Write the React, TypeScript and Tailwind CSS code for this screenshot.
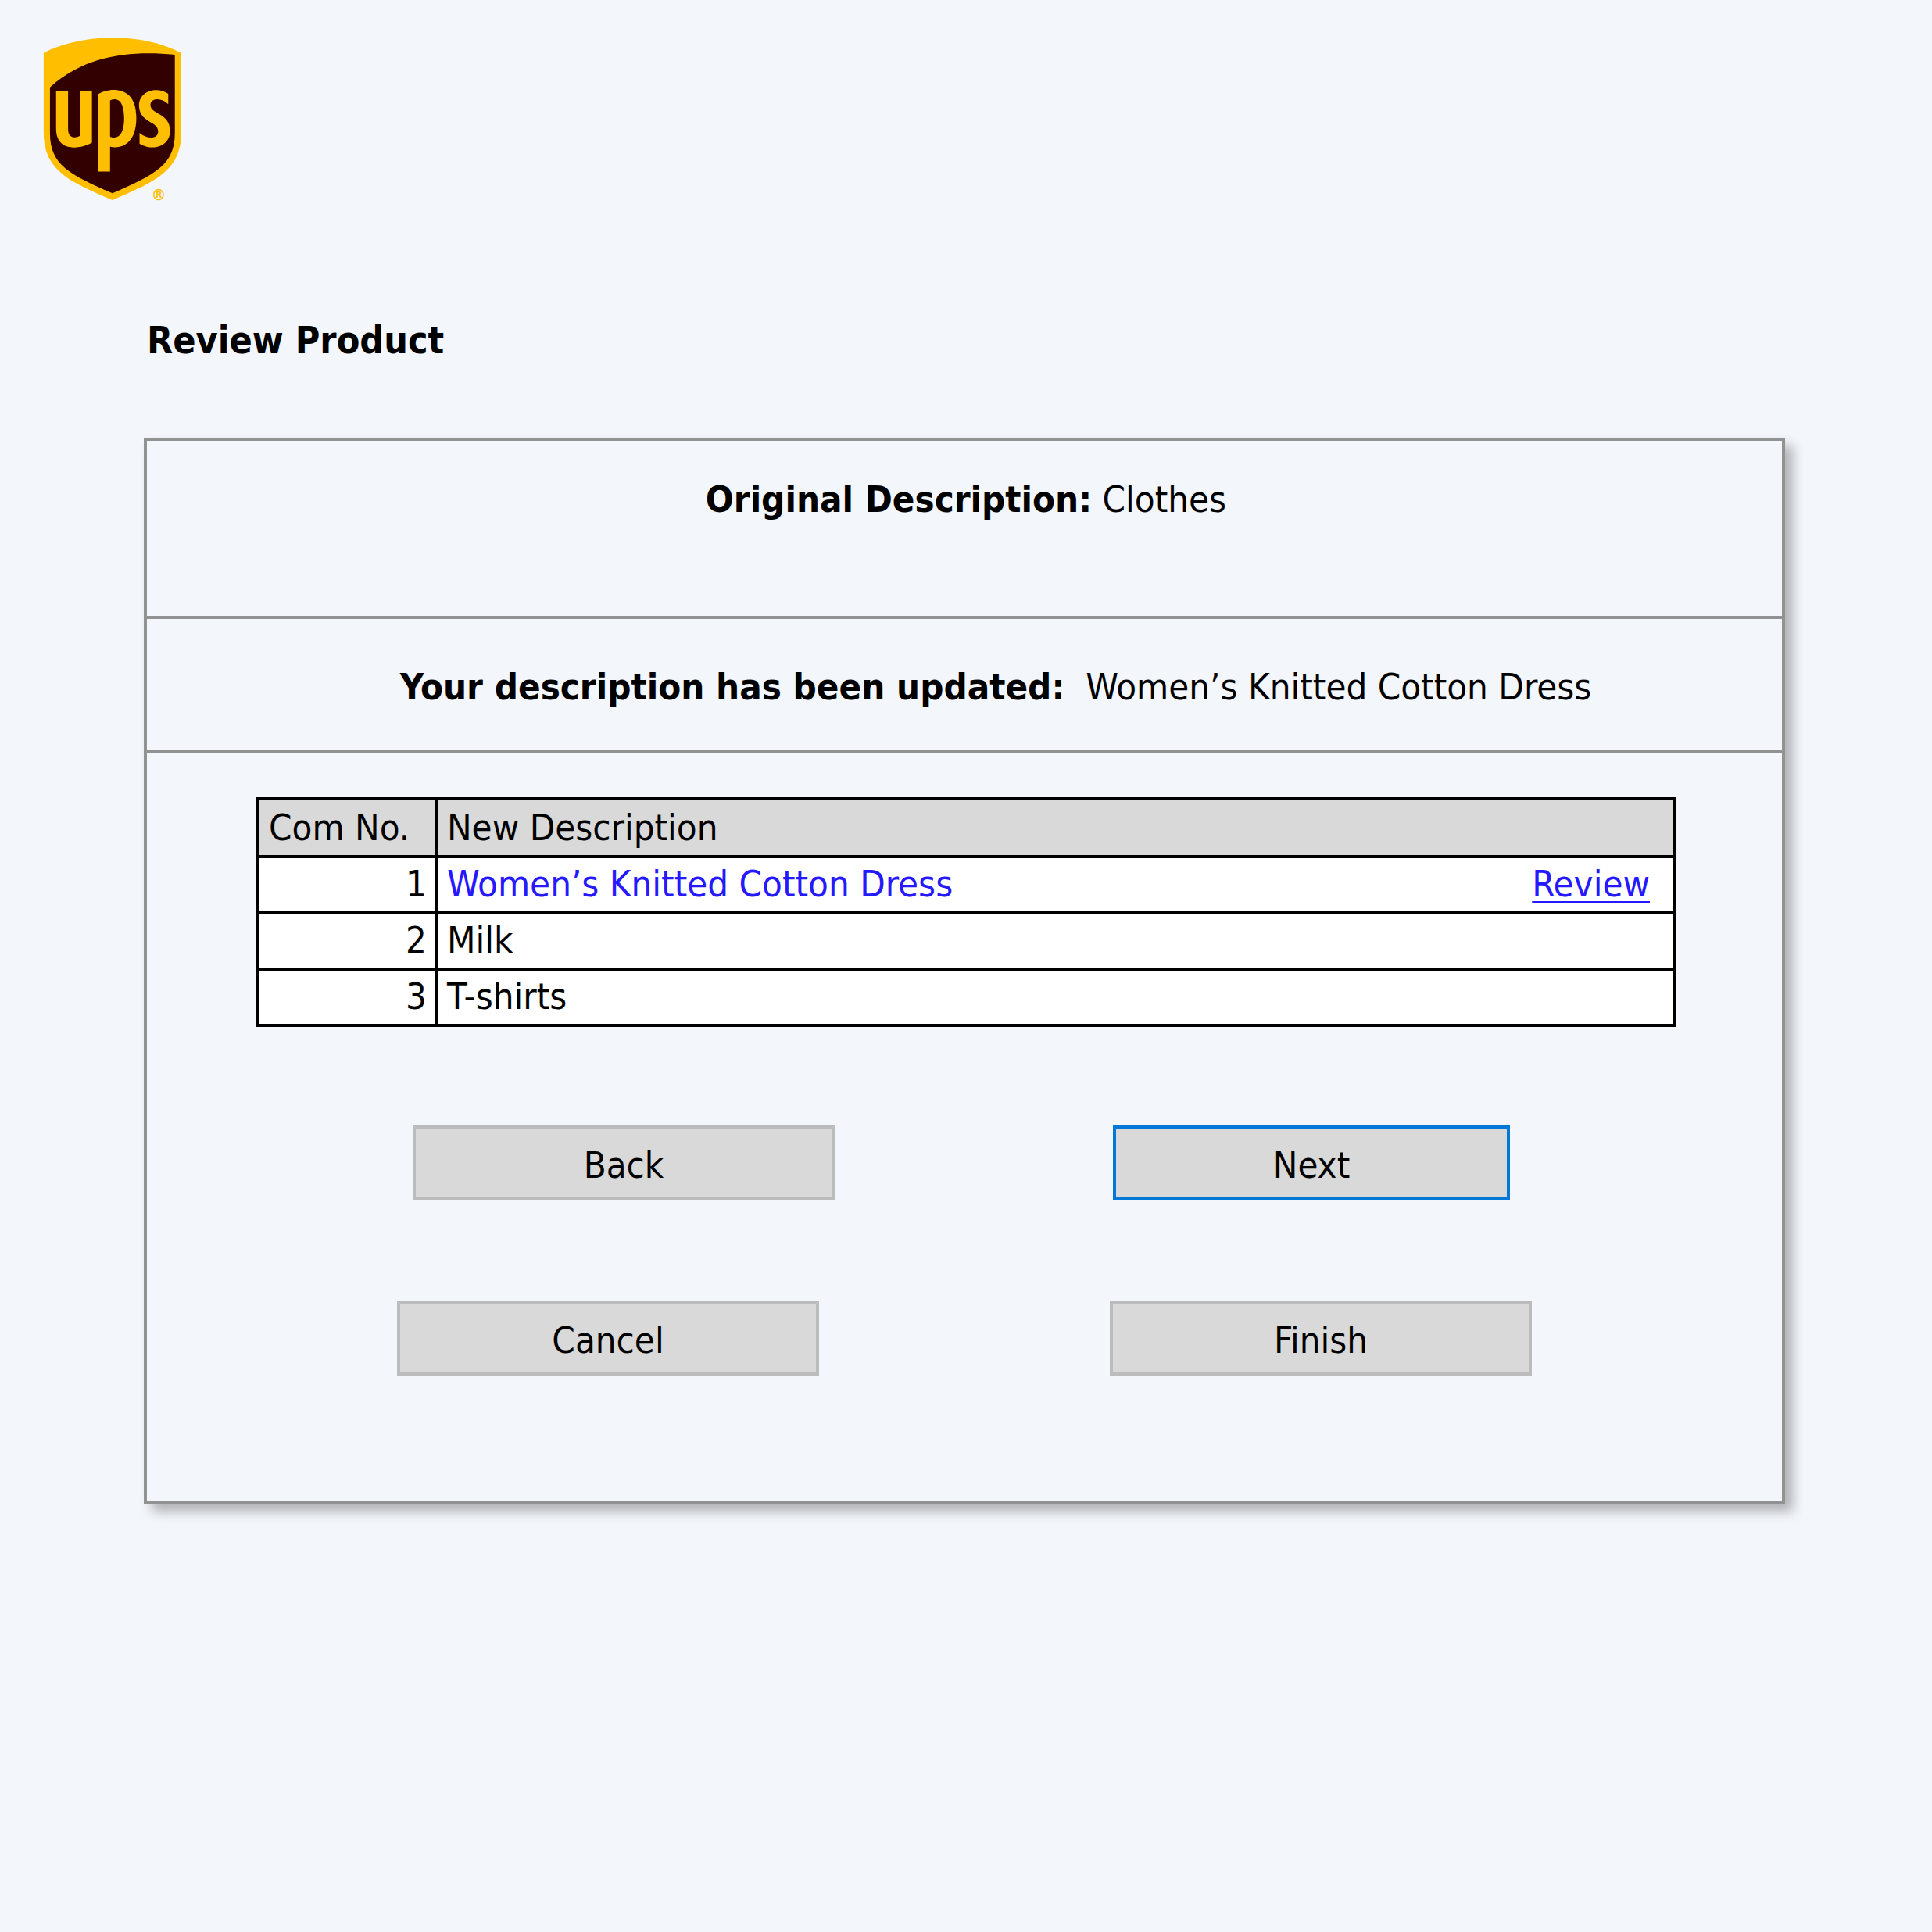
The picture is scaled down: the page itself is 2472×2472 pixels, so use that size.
import type { ButtonHTMLAttributes, ReactNode } from 'react';
import { FaUps } from 'react-icons/fa';

type Product = { no: number; description: string; updated?: boolean };

const products: Product[] = [
  { no: 1, description: 'Women’s Knitted Cotton Dress', updated: true },
  { no: 2, description: 'Milk' },
  { no: 3, description: 'T-shirts' },
];

function Logo() {
  return (
    <svg
      role="img"
      aria-label="UPS"
      viewBox="0 0 180 238"
      className="ml-[54px] h-[238px] w-[180px] overflow-visible text-[#ffbe00]"
    >
      <svg viewBox="0 0 384 512" width="180" height="238" preserveAspectRatio="none">
        <path
          fill="#330000"
          d="M12 130L80 85L200 60L300 60L370 78V297C370 345 354 380 324 404C289 432 234 452 192 471C150 452 95 432 60 404C30 380 12 345 12 297Z"
        />
        <FaUps x="-64" y="0" size="512" />
      </svg>
      <text x="149" y="223" textAnchor="middle" fill="#ffbe00" stroke="#ffbe00" strokeWidth="0.5" fontSize="20">
        ®
      </text>
    </svg>
  );
}

function ActionButton({
  children,
  primary = false,
  ...rest
}: { children: ReactNode; primary?: boolean } & ButtonHTMLAttributes<HTMLButtonElement>) {
  return (
    <button
      type="button"
      {...rest}
      className={
        primary
          ? 'w-[508px] border-4 border-[#0078d7] bg-[#d9d9d9] pt-[17px] pb-[11px] text-center'
          : 'w-[540px] border-4 border-[#bcbcbc] bg-[#d9d9d9] pt-[17px] pb-[11px] text-center'
      }
    >
      {children}
    </button>
  );
}

export default function App() {
  return (
    <main className="min-h-screen bg-[#f3f6fb] pt-[33px] font-['DejaVu_Sans_Condensed','DejaVu_Sans',sans-serif] text-[47px] leading-[60px] text-black">
      <header>
        <Logo />
        <h1 className="mt-[134px] pl-[188px] text-[48px] leading-[60px] font-bold">Review Product</h1>
      </header>

      <section className="mt-[95px] mr-[188px] ml-[184px] border-4 border-[#919292] bg-[#f3f6fb] shadow-[10px_10px_14px_rgba(0,0,0,0.28)]">
        <p className="border-b-4 border-[#919292] pt-[45px] pb-[119px] pl-1 text-center">
          <strong>Original Description:</strong> Clothes
        </p>
        <p className="border-b-4 border-[#919292] pt-[57px] pb-[51px] pl-[80px] text-center">
          <strong>Your description has been updated:</strong>&nbsp; Women’s Knitted Cotton Dress
        </p>

        <div className="mt-[56px] mr-[136px] ml-[140px]">
          <table className="w-full table-fixed border-collapse border-4 border-black bg-white">
            <thead>
              <tr className="bg-[#d9d9d9] text-left">
                <th scope="col" className="w-[228px] border-4 border-black py-[5px] pl-3 font-normal whitespace-nowrap">
                  Com No.
                </th>
                <th scope="col" className="border-4 border-black py-[5px] pl-3 font-normal">
                  New Description
                </th>
              </tr>
            </thead>
            <tbody>
              {products.map((p) => (
                <tr key={p.no}>
                  <td className="border-4 border-black pt-[3px] pr-[10px] pb-[5px] text-right">{p.no}</td>
                  <td className="border-4 border-black pt-[3px] pr-[29px] pb-[5px] pl-3">
                    {p.updated ? (
                      <div className="flex justify-between text-[#2619ff]">
                        <span>{p.description}</span>
                        <a href="#review" className="underline decoration-[3px] underline-offset-[6px] [text-decoration-skip-ink:none]">
                          Review
                        </a>
                      </div>
                    ) : (
                      p.description
                    )}
                  </td>
                </tr>
              ))}
            </tbody>
          </table>
        </div>

        <div className="mt-[126px] flex justify-center gap-[356px] pr-2">
          <ActionButton>Back</ActionButton>
          <ActionButton primary>Next</ActionButton>
        </div>
        <div className="mt-32 flex justify-center gap-[372px] pb-40">
          <ActionButton>Cancel</ActionButton>
          <ActionButton>Finish</ActionButton>
        </div>
      </section>
    </main>
  );
}
